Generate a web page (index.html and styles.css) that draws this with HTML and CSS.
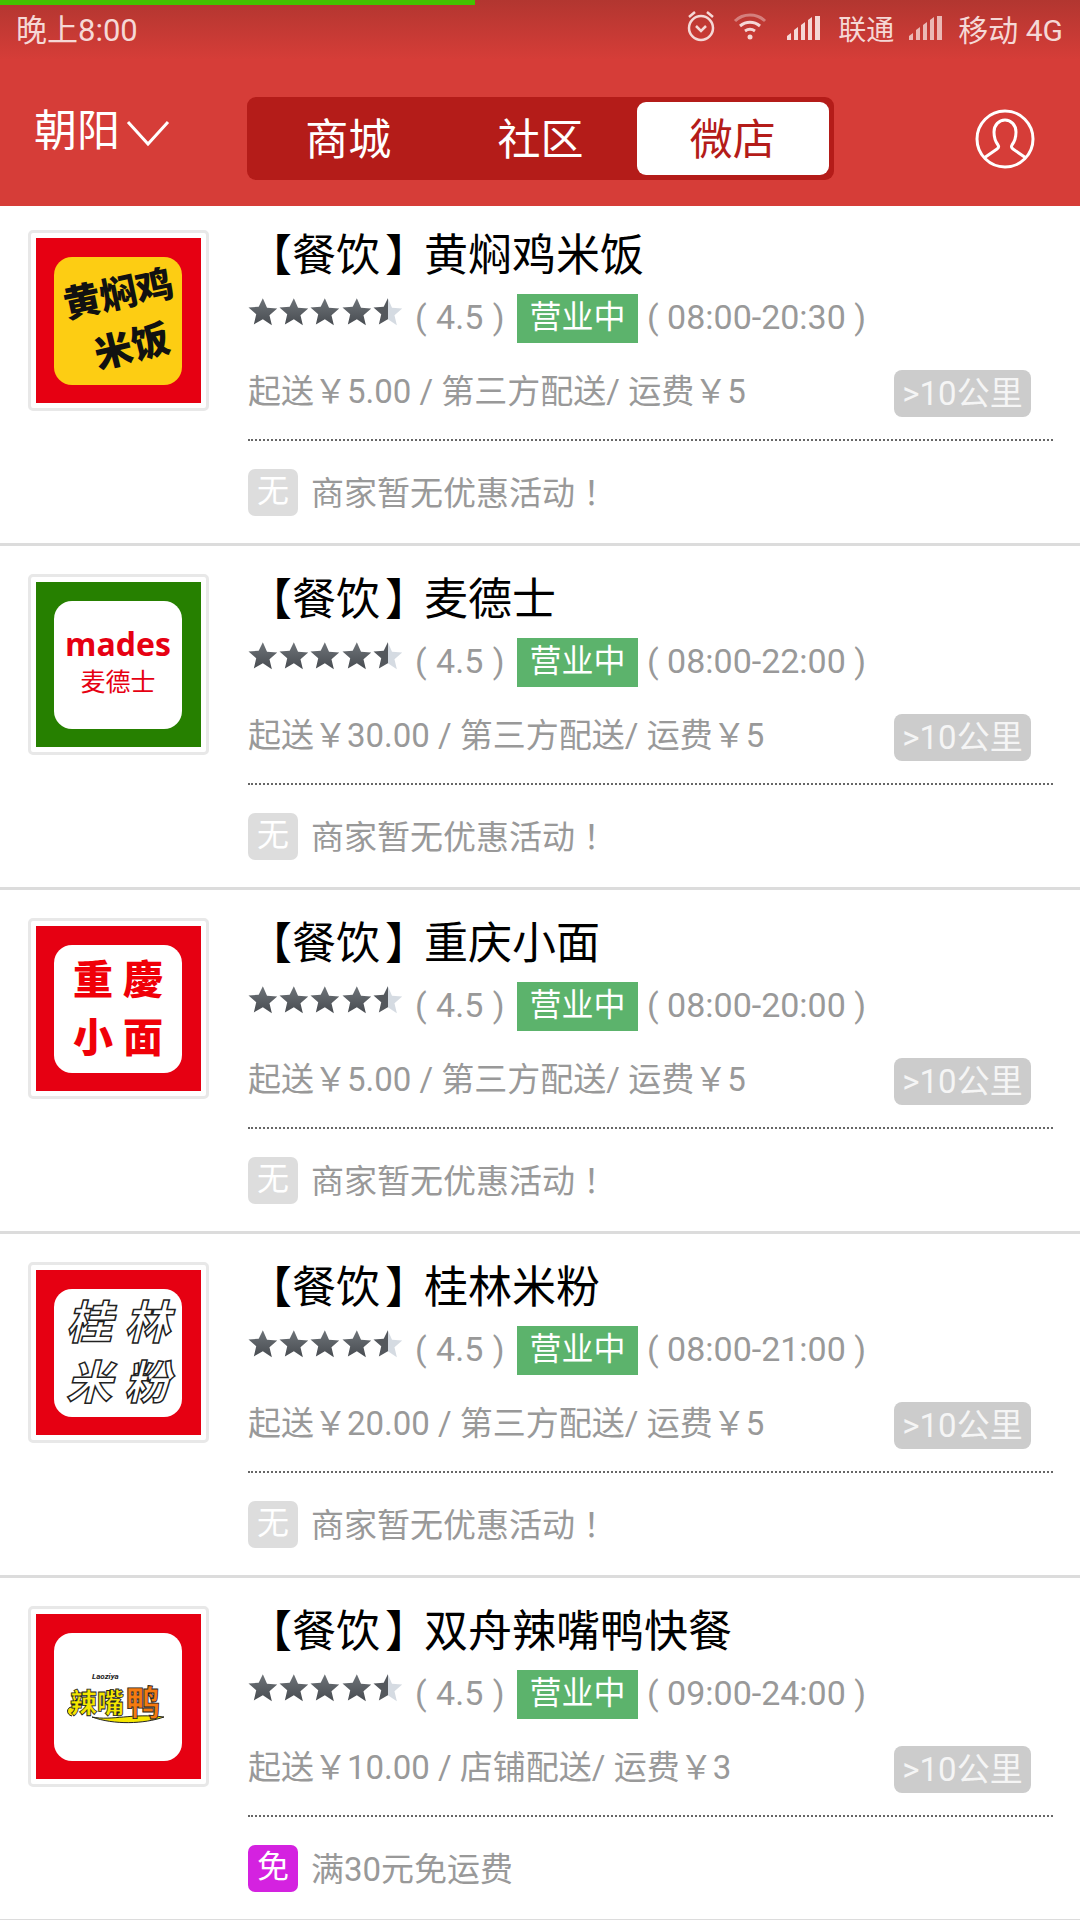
FILE: index.html
```html
<!DOCTYPE html>
<html lang="zh-CN">
<head>
    <meta charset="UTF-8">
    <meta name="viewport" content="width=device-width, initial-scale=1.0">
    <title>微店</title>
    <link rel="stylesheet" href="styles.css">
</head>
<body>

<svg class="defs" width="0" height="0">
    <defs>
        <linearGradient id="starDark" x1="0" y1="0" x2="0" y2="1">
            <stop offset="0" stop-color="#6f7479"/>
            <stop offset="1" stop-color="#474b50"/>
        </linearGradient>
        <linearGradient id="starHalf" x1="0" y1="0" x2="1" y2="0">
            <stop offset="0.5" stop-color="#54585d"/>
            <stop offset="0.5" stop-color="#d5dbe2"/>
        </linearGradient>
        <symbol id="star" viewBox="0 0 30 30">
            <path d="M15 1l4.200 9.600 10.300.9-7.800 6.800 2.400 10.200L15 22.200 5.900 27.500l2.400-10.200-7.800-6.800 10.300-.9z"/>
        </symbol>
        <symbol id="signal" viewBox="0 0 36 26">
            <path d="M1 25v-4l4-3v7zM8 25V15l4-3v13zM15 25V10l4-3v18zM22 25V5l4-3v23zM29 25V1h5v24z"/>
        </symbol>
    </defs>
</svg>

<header class="top">
    <div class="progress"></div>
    <div class="status">
        <span class="time">晚上8:00</span>
        <div class="status-right">
            <svg class="ic-alarm" viewBox="0 0 30 34" width="30" height="34" fill="none" stroke="#f5d8d6" stroke-width="2.500">
                <circle cx="15" cy="19" r="12"/>
                <path d="M10 17l5 5 5-5M3 8l6-5M27 8l-6-5"/>
            </svg>
            <svg class="ic-wifi" viewBox="0 0 34 30" width="34" height="30" fill="none" stroke="#f5d8d6" stroke-width="3">
                <path d="M2 10c8-8 22-8 30 0" opacity="0.45"/>
                <path d="M7 15c6-5 14-5 20 0"/>
                <path d="M12 20c3-2 7-2 10 0"/>
                <circle cx="17" cy="26" r="2.500" fill="#f5d8d6" stroke="none"/>
            </svg>
            <svg class="ic-signal" width="36" height="26"><use href="#signal"/></svg>
            <span class="carrier">联通</span>
            <svg class="ic-signal weak" width="36" height="26"><use href="#signal"/></svg>
            <span>移动 4G</span>
        </div>
    </div>
    <nav class="nav">
        <div class="city">
            <span>朝阳</span>
            <svg viewBox="0 0 44 28" width="44" height="28" fill="none" stroke="#fff" stroke-width="3"><path d="M2 3l20 22L42 3"/></svg>
        </div>
        <div class="tabs">
            <span class="tab">商城</span>
            <span class="tab">社区</span>
            <span class="tab active">微店</span>
        </div>
        <svg class="avatar" viewBox="0 0 60 60" width="60" height="60" fill="none" stroke="#fff" stroke-width="3">
            <circle cx="30" cy="30" r="28"/>
            <path d="M9 49l13-9c1.500-1 2-2.500 1-4-3-4-4-8-4-13 0-7 5-12 11-12s11 5 11 12c0 5-1 9-4 13-1 1.500-.5 3 1 4l13 9"/>
        </svg>
    </nav>
</header>

<main class="shops">

    <section class="shop">
        <div class="thumb">
            <div class="logo logo-red">
                <div class="plate plate-yellow">
                    <span class="hj-top">黄焖鸡</span>
                    <span class="hj-bottom">米饭</span>
                </div>
            </div>
        </div>
        <div class="info">
            <h2 class="name">【餐饮<span class="bracket">】</span>黄焖鸡米饭</h2>
            <div class="meta">
                <span class="stars">
                    <svg><use href="#star"/></svg><svg><use href="#star"/></svg><svg><use href="#star"/></svg><svg><use href="#star"/></svg><svg class="half"><use href="#star"/></svg>
                </span>
                <span class="score">( 4.5 )</span>
                <span class="open">营业中</span>
                <span class="hours">( 08:00-20:30 )</span>
            </div>
            <div class="delivery">
                <span>起送￥5.00 / 第三方配送/ 运费￥5</span>
                <span class="distance">&gt;10公里</span>
            </div>
            <div class="promo">
                <span class="promo-tag">无</span>
                <span class="promo-text">商家暂无优惠活动<span class="bang" lang="zh-Hant">！</span></span>
            </div>
        </div>
    </section>

    <section class="shop">
        <div class="thumb">
            <div class="logo logo-green">
                <div class="plate">
                    <span class="mades">mades</span>
                    <span class="mades-cn">麦德士</span>
                </div>
            </div>
        </div>
        <div class="info">
            <h2 class="name">【餐饮<span class="bracket">】</span>麦德士</h2>
            <div class="meta">
                <span class="stars">
                    <svg><use href="#star"/></svg><svg><use href="#star"/></svg><svg><use href="#star"/></svg><svg><use href="#star"/></svg><svg class="half"><use href="#star"/></svg>
                </span>
                <span class="score">( 4.5 )</span>
                <span class="open">营业中</span>
                <span class="hours">( 08:00-22:00 )</span>
            </div>
            <div class="delivery">
                <span>起送￥30.00 / 第三方配送/ 运费￥5</span>
                <span class="distance">&gt;10公里</span>
            </div>
            <div class="promo">
                <span class="promo-tag">无</span>
                <span class="promo-text">商家暂无优惠活动<span class="bang" lang="zh-Hant">！</span></span>
            </div>
        </div>
    </section>

    <section class="shop">
        <div class="thumb">
            <div class="logo logo-red">
                <div class="plate plate-grid cq">
                    <span>重</span><span>慶</span><span>小</span><span>面</span>
                </div>
            </div>
        </div>
        <div class="info">
            <h2 class="name">【餐饮<span class="bracket">】</span>重庆小面</h2>
            <div class="meta">
                <span class="stars">
                    <svg><use href="#star"/></svg><svg><use href="#star"/></svg><svg><use href="#star"/></svg><svg><use href="#star"/></svg><svg class="half"><use href="#star"/></svg>
                </span>
                <span class="score">( 4.5 )</span>
                <span class="open">营业中</span>
                <span class="hours">( 08:00-20:00 )</span>
            </div>
            <div class="delivery">
                <span>起送￥5.00 / 第三方配送/ 运费￥5</span>
                <span class="distance">&gt;10公里</span>
            </div>
            <div class="promo">
                <span class="promo-tag">无</span>
                <span class="promo-text">商家暂无优惠活动<span class="bang" lang="zh-Hant">！</span></span>
            </div>
        </div>
    </section>

    <section class="shop">
        <div class="thumb">
            <div class="logo logo-red">
                <div class="plate plate-grid gl">
                    <span>桂</span><span>林</span><span>米</span><span>粉</span>
                </div>
            </div>
        </div>
        <div class="info">
            <h2 class="name">【餐饮<span class="bracket">】</span>桂林米粉</h2>
            <div class="meta">
                <span class="stars">
                    <svg><use href="#star"/></svg><svg><use href="#star"/></svg><svg><use href="#star"/></svg><svg><use href="#star"/></svg><svg class="half"><use href="#star"/></svg>
                </span>
                <span class="score">( 4.5 )</span>
                <span class="open">营业中</span>
                <span class="hours">( 08:00-21:00 )</span>
            </div>
            <div class="delivery">
                <span>起送￥20.00 / 第三方配送/ 运费￥5</span>
                <span class="distance">&gt;10公里</span>
            </div>
            <div class="promo">
                <span class="promo-tag">无</span>
                <span class="promo-text">商家暂无优惠活动<span class="bang" lang="zh-Hant">！</span></span>
            </div>
        </div>
    </section>

    <section class="shop">
        <div class="thumb">
            <div class="logo logo-red">
                <div class="plate">
                    <svg class="ya" viewBox="0 0 108 54" width="108" height="54">
                        <path d="M8 46c-6-1-6-9 0-9 4 0 4 5 1 5M28 47c20 4 40-4 72 0-20 7-50 8-72 0z" fill="#f5e600" stroke="#222" stroke-width="1"/>
                        <text class="ya-main" x="6" y="43">辣嘴</text>
                        <text class="ya-duck" x="62" y="45">鸭</text>
                        <text class="ya-latin" x="28" y="9">Laoziya</text>
                    </svg>
                </div>
            </div>
        </div>
        <div class="info">
            <h2 class="name">【餐饮<span class="bracket">】</span>双舟辣嘴鸭快餐</h2>
            <div class="meta">
                <span class="stars">
                    <svg><use href="#star"/></svg><svg><use href="#star"/></svg><svg><use href="#star"/></svg><svg><use href="#star"/></svg><svg class="half"><use href="#star"/></svg>
                </span>
                <span class="score">( 4.5 )</span>
                <span class="open">营业中</span>
                <span class="hours">( 09:00-24:00 )</span>
            </div>
            <div class="delivery">
                <span>起送￥10.00 / 店铺配送/ 运费￥3</span>
                <span class="distance">&gt;10公里</span>
            </div>
            <div class="promo">
                <span class="promo-tag free">免</span>
                <span class="promo-text">满30元免运费</span>
            </div>
        </div>
    </section>

</main>

</body>
</html>
```

FILE: styles.css
```css
* {
    box-sizing: border-box;
}

html, body {
    margin: 0;
    padding: 0;
}

body {
    width: 1080px;
    height: 1920px;
    overflow: hidden;
    background-color: #fff;
    font-family: Roboto, "Noto Sans CJK SC", sans-serif;
    color: #999;
}

.defs {
    display: block;
    height: 0;
}

/* header */
.top {
    position: relative;
    height: 206px;
    background: linear-gradient(#b23630 0, #d63d38 60px);
}

.progress {
    position: absolute;
    left: 0;
    top: 0;
    width: 475px;
    height: 5px;
    background-color: #44c200;
}

.status {
    height: 50px;
    padding: 5px 17px 0 16px;
    display: flex;
    justify-content: space-between;
    align-items: center;
    color: #f5d8d6;
    font-size: 30px;
}

.time {
    font-size: 31px;
}

.status-right {
    display: flex;
    align-items: center;
}

.ic-alarm {
    margin: -4px 17px 0 0;
}

.ic-wifi {
    margin: -4px 19px 0 0;
}

.ic-signal {
    fill: #f5d8d6;
    margin-right: 16px;
}

.ic-signal.weak {
    opacity: 0.8;
    margin-right: 14px;
}

.carrier {
    margin-right: 14px;
    font-size: 28px;
}

.nav {
    display: flex;
    align-items: center;
    height: 156px;
    padding: 0 0 0 34px;
    color: #fff;
}

.city {
    width: 213px;
    display: flex;
    align-items: center;
    font-size: 43px;
    margin-top: -3px;
}

.city svg {
    margin: 12px 0 0 6px;
}

.tabs {
    width: 587px;
    height: 83px;
    margin-top: 21px;
    padding: 5px;
    display: flex;
    background-color: #b41c19;
    border-radius: 9px;
}

.tab {
    flex: 1;
    display: flex;
    align-items: center;
    justify-content: center;
    padding-bottom: 5px;
    font-size: 43px;
}

.tab.active {
    background-color: #fff;
    color: #b41c19;
    border-radius: 9px;
}

.avatar {
    margin: 21px 0 0 141px;
}

/* shop rows */
.shop {
    height: 340px;
    margin-bottom: 4px;
    padding: 24px 27px 0 28px;
    display: flex;
    align-items: flex-start;
    border-bottom: 3px solid #dcdcdc;
}

.thumb {
    width: 181px;
    height: 181px;
    flex-shrink: 0;
    padding: 5px;
    border: 3px solid #e8e8e8;
    border-radius: 5px;
}

.logo {
    width: 165px;
    height: 165px;
    padding: 19px 19px 18px 18px;
}

.logo-red {
    background-color: #e60012;
}

.logo-green {
    background-color: #268000;
}

.plate {
    width: 128px;
    height: 128px;
    background-color: #fff;
    border-radius: 18px;
    overflow: hidden;
    display: flex;
    flex-direction: column;
    align-items: center;
    justify-content: center;
}

.plate-yellow {
    background-color: #fdcd13;
    color: #111;
    font-weight: 900;
}

.hj-top {
    font-size: 37px;
    line-height: 46px;
    white-space: nowrap;
    transform: rotate(-12deg);
}

.hj-bottom {
    font-size: 38px;
    line-height: 46px;
    margin: 6px 0 0 28px;
    transform: rotate(-14deg);
}

.mades {
    color: #e60012;
    font-family: "Open Sans", sans-serif;
    font-weight: 700;
    font-size: 32px;
    line-height: 38px;
    margin-top: -6px;
}

.mades-cn {
    color: #e60012;
    font-size: 25px;
    line-height: 34px;
    margin-top: 3px;
}

.plate-grid {
    display: grid;
    grid-template-columns: 1fr 1fr;
    justify-items: center;
    align-content: center;
}

.cq {
    color: #f00008;
    font-family: "Noto Sans CJK SC", sans-serif;
    font-weight: 900;
    font-size: 40px;
    line-height: 58px;
    padding: 0 14px 6px;
}

.gl {
    color: #fff;
    font-style: italic;
    font-weight: 700;
    font-size: 46px;
    line-height: 60px;
    padding: 0 6px;
    -webkit-text-stroke: 1.500px #222;
}

.ya-main {
    font-size: 27px;
    font-weight: 900;
    fill: #f5e600;
    stroke: #222;
    stroke-width: 0.8px;
}

.ya-duck {
    font-size: 34px;
    font-weight: 900;
    fill: #f47a10;
    stroke: #222;
    stroke-width: 0.8px;
}

.ya-latin {
    font-size: 8px;
    font-style: italic;
    font-weight: 700;
    fill: #222;
}

.info {
    flex: 1;
    margin-left: 39px;
}

.name {
    margin: 0;
    height: 52px;
    font-weight: 400;
    font-size: 44px;
    line-height: 45px;
    color: #000;
    white-space: nowrap;
    font-family: "Noto Sans CJK SC", sans-serif;
}

.bracket {
    margin-left: 5px;
    letter-spacing: -5px;
}

.meta {
    margin-top: 12px;
    height: 49px;
    display: flex;
    align-items: center;
    font-size: 34px;
}

.stars {
    display: flex;
    width: 156px;
    margin-top: -13px;
}

.stars svg {
    width: 30px;
    height: 30px;
    margin-right: 1.500px;
    fill: url(#starDark);
}

.stars svg.half {
    fill: url(#starHalf);
}

.score {
    margin: -3px 0 0 11px;
    width: 102px;
    white-space: nowrap;
    word-spacing: 1px;
}

.open {
    width: 121px;
    height: 49px;
    line-height: 47px;
    text-align: center;
    background-color: #5cb36c;
    color: #fff;
    font-size: 32px;
}

.hours {
    margin: -3px 0 0 9px;
    white-space: nowrap;
}

.delivery {
    margin-top: 27px;
    height: 47px;
    display: flex;
    justify-content: space-between;
    align-items: center;
    font-size: 33px;
    white-space: nowrap;
}

.delivery > span:first-child {
    margin-top: -9px;
}

.distance {
    width: 137px;
    height: 47px;
    margin-right: 22px;
    line-height: 47px;
    text-align: center;
    background-color: #ccc;
    color: #f5f5f5;
    border-radius: 8px;
}

.promo {
    margin-top: 22px;
    padding-top: 28px;
    border-top: 2px dotted #666;
    display: flex;
    align-items: center;
    font-size: 33px;
}

.promo-tag {
    width: 50px;
    height: 47px;
    margin-right: 13px;
    line-height: 45px;
    text-align: center;
    background-color: #ddd;
    color: #fff;
    border-radius: 7px;
    font-size: 32px;
}

.promo-tag.free {
    background-color: #d422e0;
}

.promo-text {
    margin-top: -3px;
}

.bang {
    font-family: "Noto Sans CJK TC", sans-serif;
}
```
